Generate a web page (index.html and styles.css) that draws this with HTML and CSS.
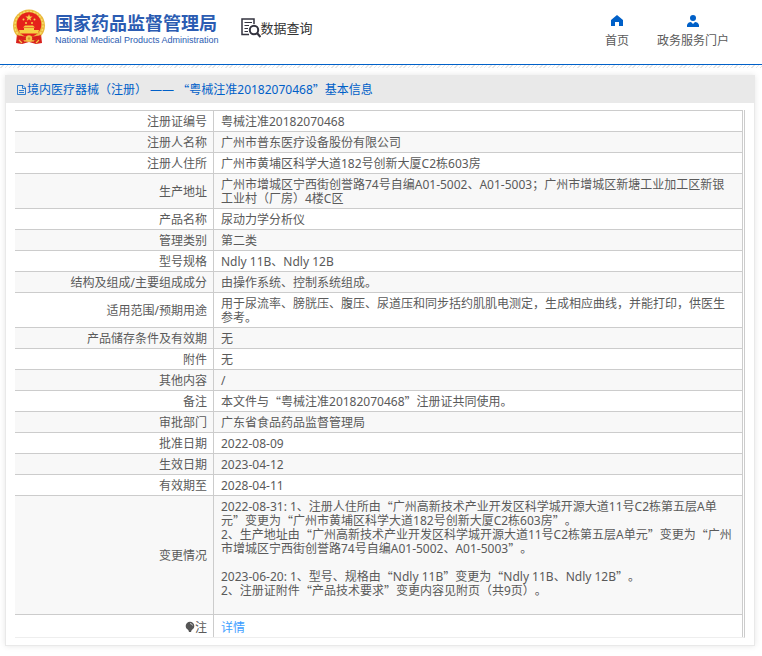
FILE: index.html
```html
<!DOCTYPE html>
<html lang="zh-CN">
<head>
    <meta charset="UTF-8">
    <meta name="viewport" content="width=device-width, initial-scale=1.0">
    <title>国家药品监督管理局 - 数据查询</title>
    <link rel="stylesheet" href="styles.css">
</head>
<body>
    <header class="header">
        <a class="logo" href="#">
            <svg class="emblem" viewBox="0 0 34 36" aria-hidden="true">
                <path d="M5 25 H29 L30 34 L24 35 L17 33 L10 35 L4 34 Z" fill="#d8201c"/>
                <circle cx="17" cy="16.5" r="16" fill="#eab93c"/>
                <circle cx="17" cy="16.5" r="14" fill="none" stroke="#f8dc6c" stroke-width="1.5" stroke-dasharray="2 1.5"/>
                <circle cx="17" cy="15.5" r="12.3" fill="#e5221b"/>
                <path d="M17 5 L17.9 7.6 L20.6 7.6 L18.4 9.2 L19.2 11.8 L17 10.2 L14.8 11.8 L15.6 9.2 L13.4 7.6 L16.1 7.6 Z" fill="#f8d24c"/>
                <circle cx="11.5" cy="10.5" r="1" fill="#f8d24c"/>
                <circle cx="22.5" cy="10.5" r="1" fill="#f8d24c"/>
                <circle cx="14" cy="14" r="1" fill="#f8d24c"/>
                <circle cx="20" cy="14" r="1" fill="#f8d24c"/>
                <path d="M11 18.5 L13 16.5 H21 L23 18.5 Z M12 19 H22 V21 H27 L26 24.5 H8 L7 21 H12 Z" fill="#f6d045"/>
                <path d="M5 26 Q17 29 29 26 L28 30 Q17 33 6 30 Z" fill="#d8201c"/>
                <circle cx="17" cy="29.5" r="3.2" fill="#f3c64c"/>
                <circle cx="17" cy="29.5" r="1.2" fill="#d89a2c"/>
                <path d="M7 31 L10 34 M27 31 L24 34 M12 32 H22" stroke="#f3c64c" stroke-width="1.2"/>
            </svg>
            <span class="logo-text">
                <span class="logo-cn">国家药品监督管理局</span>
                <span class="logo-en">National Medical Products Administration</span>
            </span>
        </a>
        <a class="search-title" href="#">
            <svg viewBox="0 0 20 20" aria-hidden="true">
                <path d="M8 16.5 H1 V1 H13 V6" fill="none" stroke="#33333f" stroke-width="1.5"/>
                <path d="M3.5 4.5 H11 M3.5 7.5 H8 M3.5 10.5 H7 M3.5 13.5 H7" stroke="#33333f"/>
                <circle cx="13" cy="12" r="4.2" fill="none" stroke="#33333f" stroke-width="2"/>
                <path d="M16 15 L19.5 19" stroke="#33333f" stroke-width="2.2"/>
            </svg>
            <span>数据查询</span>
        </a>
        <nav class="nav">
            <a href="#">
                <svg viewBox="0 0 12 12" aria-hidden="true">
                    <path d="M6 0 L12 5 V11 H8 V7 H4 V11 H0 V5 Z" fill="#0060c8"/>
                </svg>
                <span>首页</span>
            </a>
            <a href="#">
                <svg viewBox="0 0 12 12" aria-hidden="true">
                    <circle cx="6" cy="3" r="3" fill="#0060c8"/>
                    <path d="M0 12 V10 Q1 7 4 7 L6 9 L8 7 Q11 7 12 10 V12 Z" fill="#0060c8"/>
                </svg>
                <span>政务服务门户</span>
            </a>
        </nav>
    </header>
    <div class="stripe"></div>

    <main class="card">
        <h1 class="card-title">
            <svg viewBox="0 0 11 12" aria-hidden="true">
                <path d="M1.5 1.5 H7 L9.5 4 V10.5 H1.5 Z M6.5 1.5 V4.5 H9.5 M3 6.5 H8 M3 8.5 H8" fill="none" stroke="#0060c8" stroke-width="0.8"/>
            </svg>
            <span>境内医疗器械（注册） —— <span class="q">“</span>粤械注准20182070468<span class="q">”</span>基本信息</span>
        </h1>
        <div class="card-body">
            <table class="info">
                <tbody>
                    <tr><th scope="row">注册证编号</th><td>粤械注准20182070468</td></tr>
                    <tr><th scope="row">注册人名称</th><td>广州市普东医疗设备股份有限公司</td></tr>
                    <tr><th scope="row">注册人住所</th><td>广州市黄埔区科学大道182号创新大厦C2栋603房</td></tr>
                    <tr><th scope="row">生产地址</th><td>广州市增城区宁西街创誉路74号自编A01-5002、A01-5003；广州市增城区新塘工业加工区新银工业村（厂房）4楼C区</td></tr>
                    <tr><th scope="row">产品名称</th><td>尿动力学分析仪</td></tr>
                    <tr><th scope="row">管理类别</th><td>第二类</td></tr>
                    <tr><th scope="row">型号规格</th><td>Ndly 11B、Ndly 12B</td></tr>
                    <tr><th scope="row">结构及组成/主要组成成分</th><td>由操作系统、控制系统组成。</td></tr>
                    <tr><th scope="row">适用范围/预期用途</th><td>用于尿流率、膀胱压、腹压、尿道压和同步括约肌肌电测定，生成相应曲线，并能打印，供医生参考。</td></tr>
                    <tr><th scope="row">产品储存条件及有效期</th><td>无</td></tr>
                    <tr><th scope="row">附件</th><td>无</td></tr>
                    <tr><th scope="row">其他内容</th><td>/</td></tr>
                    <tr><th scope="row">备注</th><td>本文件与<span class="q">“</span>粤械注准20182070468<span class="q">”</span>注册证共同使用。</td></tr>
                    <tr><th scope="row">审批部门</th><td>广东省食品药品监督管理局</td></tr>
                    <tr><th scope="row">批准日期</th><td>2022-08-09</td></tr>
                    <tr><th scope="row">生效日期</th><td>2023-04-12</td></tr>
                    <tr><th scope="row">有效期至</th><td>2028-04-11</td></tr>
                    <tr>
                        <th scope="row">变更情况</th>
                        <td>
                            2022-08-31: 1、注册人住所由<span class="q">“</span>广州高新技术产业开发区科学城开源大道11号C2栋第五层A单元<span class="q">”</span>变更为<span class="q">“</span>广州市黄埔区科学大道182号创新大厦C2栋603房<span class="q">”</span>。<br>
                            2、生产地址由<span class="q">“</span>广州高新技术产业开发区科学城开源大道11号C2栋第五层A单元<span class="q">”</span>变更为<span class="q">“</span>广州市增城区宁西街创誉路74号自编A01-5002、A01-5003<span class="q">”</span>。<br>
                            <br>
                            2023-06-20: 1、型号、规格由<span class="q">“</span>Ndly 11B<span class="q">”</span>变更为<span class="q">“</span>Ndly 11B、Ndly 12B<span class="q">”</span>。<br>
                            2、注册证附件<span class="q">“</span>产品技术要求<span class="q">”</span>变更内容见附页（共9页）。<br>
                            <br>
                        </td>
                    </tr>
                    <tr class="note">
                        <th scope="row">
                            <svg viewBox="0 0 10 12" aria-hidden="true">
                                <circle cx="5" cy="5" r="4.3" fill="#555"/>
                                <path d="M3 8 H7 L6 11 H4 Z" fill="#555"/>
                                <path d="M5 2.5 Q7 2.5 7.5 4.5" fill="none" stroke="#ddd" stroke-width="0.8"/>
                            </svg>注
                        </th>
                        <td><a href="#">详情</a></td>
                    </tr>
                </tbody>
            </table>
        </div>
    </main>
</body>
</html>
```

FILE: styles.css
```css
* {
    box-sizing: border-box;
}
body {
    margin: 0;
    font-family: "Noto Sans", "Noto Sans CJK SC", sans-serif;
    font-size: 12px;
    line-height: 14px;
    color: #5a5a5a;
    background-color: #fff;
    text-spacing-trim: space-all;
}
a {
    text-decoration: none;
    color: inherit;
}
/* full-width quotation marks */
.q {
    font-family: "Noto Sans CJK SC", sans-serif;
    vertical-align: top;
}
.header {
    display: flex;
    align-items: flex-start;
    height: 65px;
    padding: 0 33px 0 12px;
    border-bottom: 1px solid #0060c8;
}
.stripe {
    height: 3px;
    background: repeating-linear-gradient(135deg, #fff 0, #fff 2px, #e6e6e6 2px, #e6e6e6 3px);
}
.logo {
    display: flex;
    gap: 9px;
    padding-top: 9px;
}
.emblem {
    width: 34px;
    height: 36px;
}
.logo-text {
    display: flex;
    flex-direction: column;
    color: #2b5cb2;
}
.logo-cn {
    font-family: "Noto Sans CJK SC", sans-serif;
    font-size: 18px;
    font-weight: bold;
    line-height: 26px;
}
.logo-en {
    font-family: "Liberation Sans", Arial, sans-serif;
    font-size: 9px;
    line-height: 10px;
}
.search-title {
    display: flex;
    align-items: center;
    margin-left: 22px;
    padding-top: 18px;
    font-size: 13px;
    line-height: 20px;
    color: #333;
}
.search-title svg {
    width: 20px;
    height: 20px;
}
.nav {
    display: flex;
    gap: 28px;
    margin-left: auto;
    padding-top: 15px;
}
.nav a {
    display: flex;
    flex-direction: column;
    align-items: center;
    gap: 6px;
    line-height: 16px;
}
.nav svg {
    width: 12px;
    height: 12px;
}
.card {
    margin: 7px 7px 10px 5px;
    border: 1px solid #e9e9e9;
    box-shadow: 0 0 6px rgba(0, 0, 0, 0.1);
}
.card-title {
    display: flex;
    align-items: center;
    margin: 0;
    padding: 0 10px;
    font-size: 12px;
    font-weight: normal;
    line-height: 27px;
    color: #0060c8;
    background-color: #e9e9e9;
}
.card-title svg {
    width: 11px;
    height: 12px;
}
.card-body {
    padding: 7px 9px;
}
.info {
    width: 100%;
    padding-right: 1px;
    border-collapse: separate;
    border-spacing: 0;
    border-right: 1px solid #ccc;
    border-bottom: 1px solid #eee;
}
.info th,
.info td {
    padding: 4px 7px 2px;
    border-top: 1px solid #ccc;
    border-right: 1px solid #ccc;
    font-weight: normal;
}
.info th {
    width: 199px;
    padding-right: 6px;
    text-align: right;
}
.info td {
    text-align: left;
}
.info tr:nth-child(even) {
    background-color: #f8f8f8;
}
.info .note th,
.info .note td {
    padding-top: 6px;
    background-color: #fff;
}
.note svg {
    width: 10px;
    height: 12px;
    vertical-align: -1px;
}
.note a {
    color: #409eff;
}
```
